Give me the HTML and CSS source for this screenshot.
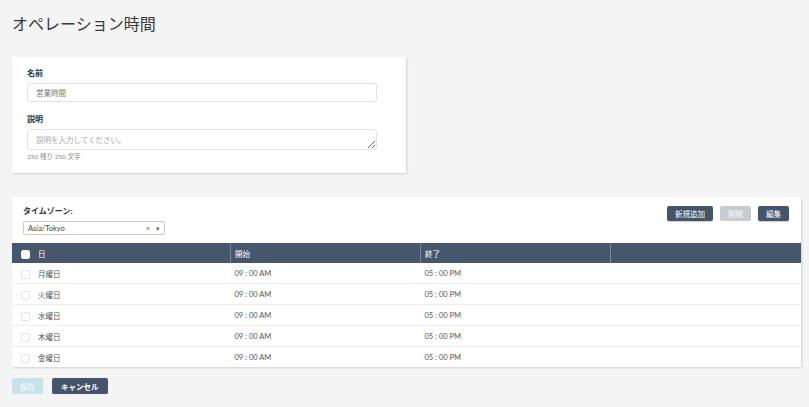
FILE: index.html
```html
<!DOCTYPE html>
<html lang="ja">
<head>
    <meta charset="UTF-8">
    <title>オペレーション時間</title>
    <link rel="stylesheet" href="styles.css">
</head>
<body>
    <h1 class="page-title">オペレーション時間</h1>

    <div class="card form-card">
        <label class="field-label">名前</label>
        <input class="text-input" type="text" value="営業時間">
        <label class="field-label second">説明</label>
        <textarea class="text-area" placeholder="説明を入力してください。"></textarea>
        <div class="counter">250 残り 250 文字</div>
    </div>

    <div class="card table-card">
        <div class="table-top">
            <div class="tz">
                <label class="field-label">タイムゾーン:</label>
                <div class="select">
                    <span>Asia/Tokyo</span>
                    <span class="select-icons"><span class="clear">×</span><span class="caret">▾</span></span>
                </div>
            </div>
            <div class="actions">
                <button class="btn">新規追加</button>
                <button class="btn disabled">削除</button>
                <button class="btn">編集</button>
            </div>
        </div>
        <table class="hours">
            <thead>
                <tr>
                    <th><span class="check head"></span>日</th>
                    <th>開始</th>
                    <th>終了</th>
                    <th></th>
                </tr>
            </thead>
            <tbody>
                <tr><td><span class="check"></span>月曜日</td><td>09 : 00 AM</td><td>05 : 00 PM</td><td></td></tr>
                <tr><td><span class="check"></span>火曜日</td><td>09 : 00 AM</td><td>05 : 00 PM</td><td></td></tr>
                <tr><td><span class="check"></span>水曜日</td><td>09 : 00 AM</td><td>05 : 00 PM</td><td></td></tr>
                <tr><td><span class="check"></span>木曜日</td><td>09 : 00 AM</td><td>05 : 00 PM</td><td></td></tr>
                <tr><td><span class="check"></span>金曜日</td><td>09 : 00 AM</td><td>05 : 00 PM</td><td></td></tr>
            </tbody>
        </table>
    </div>

    <div class="footer">
        <button class="btn save">保存</button>
        <button class="btn cancel">キャンセル</button>
    </div>
</body>
</html>
```

FILE: styles.css
```css
body {
    margin: 0;
    padding: 0 8px 0 12px;
    background: #f4f4f4;
    font-family: Lato, "Noto Sans CJK JP", sans-serif;
    color: #333;
}
.page-title {
    margin: 0;
    padding-top: 13px;
    font-size: 16px;
    line-height: 22px;
    font-weight: normal;
    color: #3a3a3a;
}
.card {
    background: white;
    box-shadow: 1px 1px 2px rgba(0,0,0,0.15);
}
.form-card {
    width: 364px;
    margin-top: 22px;
    padding: 10px 15px 11px 15px;
}
.field-label {
    display: block;
    font-size: 8px;
    line-height: 12px;
    font-weight: bold;
    color: #333;
}
.field-label.second {
    margin-top: 11px;
}
.text-input, .text-area {
    display: block;
    box-sizing: border-box;
    width: 350px;
    margin-top: 4px;
    border: 1px solid #e2e2e2;
    border-radius: 3px;
    padding: 0 8px;
    font-family: inherit;
    font-size: 7.5px;
    color: #777;
}
.text-input {
    height: 19px;
}
.text-area {
    height: 21px;
    padding-top: 4px;
    resize: vertical;
}
.text-area::placeholder {
    color: #aaa;
}
.counter {
    margin-top: 2px;
    font-size: 6.5px;
    line-height: 10px;
    color: #888;
}
.table-card {
    margin-top: 24px;
}
.table-top {
    display: flex;
    justify-content: space-between;
    align-items: flex-start;
    padding: 8px 12px 8px 11px;
}
.select {
    display: flex;
    justify-content: space-between;
    align-items: center;
    box-sizing: border-box;
    width: 142px;
    height: 14px;
    margin-top: 4px;
    padding: 0 4px;
    border: 1px solid #ccc;
    border-radius: 2px;
    font-size: 7.5px;
    color: #444;
}
.select-icons {
    font-size: 7px;
    color: #666;
}
.clear {
    margin-right: 6px;
}
.actions {
    display: flex;
    gap: 7px;
    margin-top: 1px;
}
.btn {
    height: 15px;
    padding: 0 8px;
    border: none;
    border-radius: 2px;
    background: #44546a;
    color: white;
    font-family: "Noto Sans CJK JP", sans-serif;
    font-size: 7.5px;
    box-shadow: 0 1px 1px rgba(0,0,0,0.2);
}
.btn.disabled {
    background: #c8cbd0;
    box-shadow: none;
}
.hours {
    width: 100%;
    table-layout: fixed;
    border-collapse: collapse;
    font-size: 7.5px;
}
.hours th {
    height: 20px;
    padding: 0 0 0 4px;
    background: #46566c;
    color: white;
    font-weight: normal;
    text-align: left;
    border-left: 1px solid #7a8899;
}
.hours th:first-child {
    border-left: none;
}
.hours th:nth-child(1) { width: 209px; }
.hours th:nth-child(2) { width: 185px; }
.hours th:nth-child(3) { width: 185px; }
.hours td {
    height: 20px;
    padding: 0 0 0 4px;
    color: #555;
    border-bottom: 1px solid #eee;
}
.hours td:first-child, .hours th:first-child {
    padding-left: 9px;
}
.hours tbody tr:last-child td {
    border-bottom: none;
}
.check {
    display: inline-block;
    width: 9px;
    height: 9px;
    margin-right: 8px;
    vertical-align: -2px;
    border: 1px solid #e4e4e4;
    border-radius: 2px;
    box-sizing: border-box;
}
.check.head {
    background: white;
    border-color: white;
}
.footer {
    display: flex;
    gap: 9px;
    margin-top: 11px;
}
.footer .btn {
    height: 16px;
}
.btn.save {
    background: #c6e3eb;
    box-shadow: none;
    padding: 0 8px;
}
.btn.cancel {
    padding: 0 9px;
    font-weight: bold;
}
```
